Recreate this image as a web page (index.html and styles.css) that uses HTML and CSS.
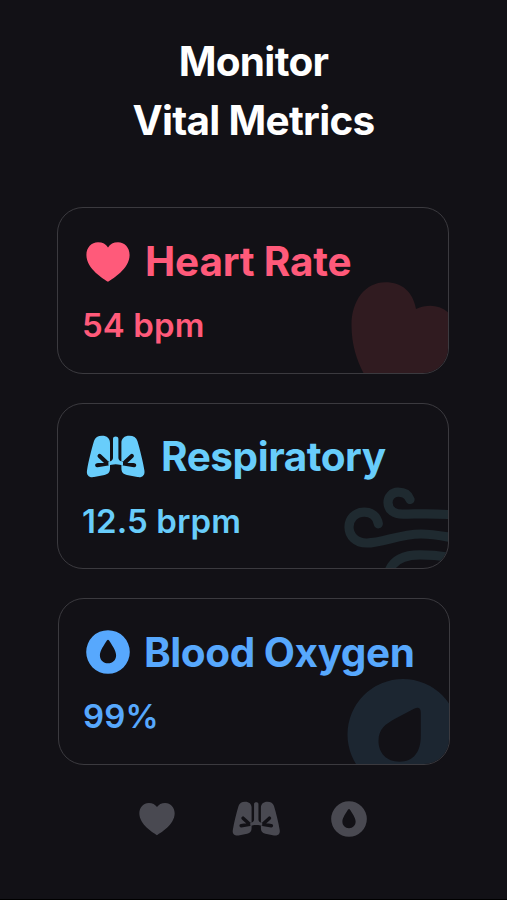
FILE: index.html
```
<!DOCTYPE html>
<html lang="en">
<head>
    <meta charset="UTF-8">
    <meta name="viewport" content="width=device-width, initial-scale=1.0">
    <title>Monitor Vital Metrics</title>
    <link rel="stylesheet" href="styles.css">
</head>
<body>
    <!-- Shared icons -->
    <svg class="sprite" aria-hidden="true">
        <symbol id="icon-heart" viewBox="0 0 44 40">
            <path d="M22 39.8C18 37.2.4 27 .4 13C.4 5.5 5.5.3 12 .3C16.5.3 20 2.2 22 5.4C24 2.2 27.5.3 32 .3C38.5.3 43.6 5.5 43.6 13C43.6 27 26 37.2 22 39.8Z"/>
        </symbol>
        <symbol id="icon-lungs" viewBox="0 0 60 44">
            <mask id="lungs-cut" maskUnits="userSpaceOnUse" x="0" y="0" width="60" height="44">
                <rect width="60" height="44" fill="#fff"/>
                <path d="M13.6 21L20 27M11.2 30.2L22 28.4M45.8 21L39.4 27M48.2 30.2L37.4 28.4" stroke="#000" stroke-width="4.2" stroke-linecap="round" fill="none"/>
            </mask>
            <g mask="url(#lungs-cut)">
                <path d="M8 6C9 2.5 12 .8 16 .8C21 .8 24 3.5 24 8V33C24 37 22.5 39 18.5 40L8 42.1C3 43 .2 40 1 35.5C2.5 26 5.5 14.5 8 6Z"/>
                <path d="M51.4 6C50.4 2.5 47.4.8 43.4.8C38.4.8 35.4 3.5 35.4 8V33C35.4 37 36.9 39 40.9 40L51.4 42.1C56.4 43 59.2 40 58.4 35.5C56.9 26 53.9 14.5 51.4 6Z"/>
            </g>
            <path d="M27 3.7C27 .7 32.4.7 32.4 3.7V23C32.4 25 34 26.3 37 27V30.2C34.5 30 33 29.2 29.7 29.2C26.4 29.2 24.9 30 22.4 30.2V27C25.4 26.3 27 25 27 23Z"/>
        </symbol>
        <symbol id="icon-oxygen" viewBox="0 0 44 44">
            <path fill-rule="evenodd" d="M22 .2A21.8 21.8 0 0 1 22 43.8A21.8 21.8 0 0 1 22 .2ZM20.9 10.5C18.5 14.5 13.9 20.5 13.9 25.2C13.9 30 17.3 33.3 22 33.3C26.7 33.3 30.1 30 30.1 25.2C30.1 20.5 25.5 14.5 23.1 10.5C22.4 9.5 21.6 9.5 20.9 10.5Z"/>
        </symbol>
    </svg>

    <div class="screen">
        <h1>Monitor<br>Vital Metrics</h1>

        <div class="cards">
            <!-- Heart Rate -->
            <div class="card card-heart">
                <svg class="card-art" viewBox="0 0 110 100">
                    <path fill="currentColor" d="M79 36C76 19 65 9.3 48.5 9.3C28 9.3 14.5 28 14.5 52C14.5 72 20 88 27 101H112V40C102 31.5 91 31 79 36Z"/>
                </svg>
                <div class="card-title">
                    <svg class="icon icon-heart"><use href="#icon-heart"/></svg>
                    <h2>Heart Rate</h2>
                </div>
                <p class="value">54 bpm</p>
            </div>

            <!-- Respiratory -->
            <div class="card card-respiratory">
                <svg class="card-art" viewBox="0 0 110 100">
                    <path class="wind" d="M73 31.5C71 26 66.5 24.2 61 24.2C55 24.2 51 29 51 34.5C51 42 57 46.2 66 46.2C80 46.2 90 44.8 115 46.8"/>
                    <path class="wind" d="M41.3 55.8C40 48 34.5 44.2 27.3 44.2C18 44.2 12 51 12 59C12 68 19 75 29.7 75C46 75 62 66 84 66C96 66 104 67.6 115 69.8"/>
                    <path class="wind" d="M52.5 102C57 91 68 86.8 83 86.8C96 86.8 104 87.6 115 89.8"/>
                </svg>
                <div class="card-title">
                    <svg class="icon icon-lungs"><use href="#icon-lungs"/></svg>
                    <h2>Respiratory</h2>
                </div>
                <p class="value">12.5 brpm</p>
            </div>

            <!-- Blood Oxygen -->
            <div class="card card-oxygen">
                <svg class="card-art" viewBox="0 0 110 100">
                    <path fill="currentColor" fill-rule="evenodd" d="M65 15A55.5 55.5 0 0 1 65 126A55.5 55.5 0 0 1 65 15ZM76 44.8C80.5 42.3 82.8 44 82.8 48.5V72C82.8 88 75.5 97.7 61.5 97.7C48.5 97.7 40.5 89 40.5 77C40.5 65 47.5 60 57.5 54.5Z"/>
                </svg>
                <div class="card-title">
                    <svg class="icon icon-oxygen"><use href="#icon-oxygen"/></svg>
                    <h2>Blood Oxygen</h2>
                </div>
                <p class="value">99%</p>
            </div>
        </div>

        <!-- Bottom navigation -->
        <div class="nav">
            <svg class="nav-heart"><use href="#icon-heart"/></svg>
            <svg class="nav-lungs"><use href="#icon-lungs"/></svg>
            <svg class="nav-oxygen"><use href="#icon-oxygen"/></svg>
        </div>
    </div>
</body>
</html>
```
FILE: styles.css
```
* {
    box-sizing: border-box;
}
body {
    margin: 0;
    font-family: Inter, "Liberation Sans", sans-serif;
    background-color: #121116;
}
h1, h2, p {
    margin: 0;
    font-weight: 700;
    white-space: nowrap;
}
svg {
    display: block;
    flex: none;
    fill: currentColor;
}
.sprite {
    position: absolute;
    width: 0;
    height: 0;
}
.screen {
    height: 900px;
    padding: 32px 57px 0;
    border-bottom: 1px solid #000;
}
h1 {
    font-size: 40.5px;
    line-height: 59px;
    letter-spacing: -0.7px;
    text-align: center;
    color: #fff;
}
.cards {
    display: flex;
    flex-direction: column;
    gap: 29px;
    margin-top: 57px;
}
.card {
    position: relative;
    width: 391.5px;
    height: 166.5px;
    padding: 23px 24px 0;
    border: 1.5px solid #3b3a3f;
    border-radius: 26px;
    overflow: hidden;
}
.card-title {
    display: flex;
    align-items: center;
    height: 60px;
    padding-left: 4px;
}
h2 {
    padding-top: 1px;
    font-size: 40.5px;
    line-height: 60px;
    letter-spacing: -0.45px;
}
.value {
    margin-top: 14px;
    font-size: 33px;
    font-weight: 600;
    line-height: 40px;
    letter-spacing: 0.1px;
}
.card-art {
    position: absolute;
    right: 1px;
    bottom: 0;
    width: 110px;
    height: 100px;
    overflow: visible;
}
.wind {
    fill: none;
    stroke: currentColor;
    stroke-width: 9.2;
    stroke-linecap: round;
}
.card-heart {
    color: #ff5a7a;
}
.card-heart .card-art {
    color: #301b20;
}
.card-heart h2 {
    letter-spacing: -0.2px;
}
.card-respiratory {
    color: #68cdfb;
}
.card-respiratory .card-art {
    color: #1f2a30;
}
.card-oxygen {
    margin-left: 1px;
    color: #57a8fd;
}
.card-oxygen .card-art {
    color: #1c2631;
}
.card-oxygen .card-title {
    padding-left: 3px;
}
.icon-heart {
    width: 44px;
    height: 40px;
    margin: 1px 15px 0 0;
}
.icon-lungs {
    width: 60px;
    height: 44px;
    margin-right: 15px;
}
.icon-oxygen {
    width: 44px;
    height: 44px;
    margin-right: 14px;
}
.nav {
    display: flex;
    align-items: center;
    margin-top: 36px;
    padding-left: 82px;
    color: #494951;
}
.nav-heart {
    width: 36px;
    height: 34px;
}
.nav-lungs {
    width: 49px;
    height: 36px;
    margin-left: 57px;
}
.nav-oxygen {
    width: 36px;
    height: 36px;
    margin-left: 50px;
}
```
